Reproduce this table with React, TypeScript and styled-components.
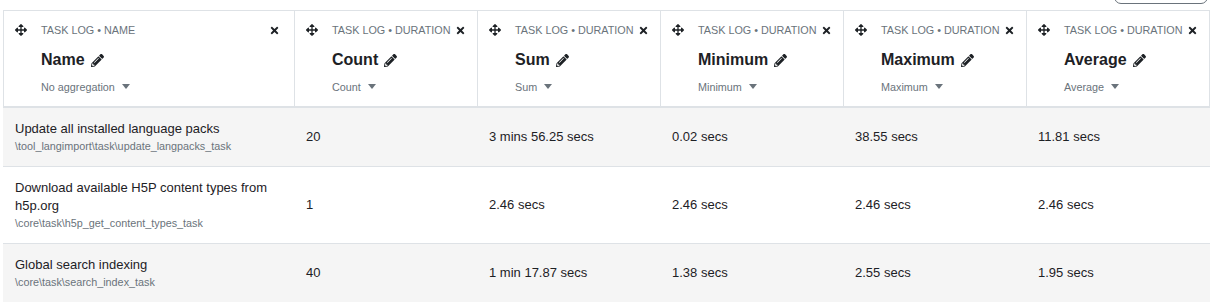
import React from 'react'
import styled, { createGlobalStyle } from 'styled-components'
import { FaArrowsAlt, FaTimes, FaPencilAlt } from 'react-icons/fa'

const GlobalStyle = createGlobalStyle`
  * {
    box-sizing: border-box;
  }
  body {
    margin: 0;
    background: #fff;
    color: #1d2125;
    font-family: "Liberation Sans", Arial, sans-serif;
  }
`

const Page = styled.main`
  padding-left: 3px;
  width: 1210px;
`

const Toolbar = styled.div`
  height: 10px;
  overflow: hidden;
  display: flex;
  justify-content: flex-end;
  align-items: flex-end;
  padding-right: 2px;
`

const ToolButton = styled.button`
  width: 94px;
  height: 32px;
  margin-bottom: 6px;
  border: 1px solid #6a737b;
  border-radius: 7px;
  background: #fff;
`

const HeadRow = styled.div`
  display: grid;
  grid-template-columns: 291px repeat(5, 183px);
  border-left: 1px solid #dee2e6;
  border-top: 1px solid #dee2e6;
  border-bottom: 2px solid #dee2e6;
`

const HeadCell = styled.div`
  display: flex;
  padding: 11px 14px 11px 11px;
  border-right: 1px solid #dee2e6;
`

const Handle = styled.div`
  flex: 0 0 26px;
  height: 16px;
  display: flex;
  align-items: center;
  font-size: 12px;
  color: #1d2125;
`

const HeadBody = styled.div`
  flex: 1;
  min-width: 0;
  display: flex;
  flex-direction: column;
`

const TopLine = styled.div`
  display: flex;
  align-items: center;
  justify-content: space-between;
  gap: 4px;
  height: 16px;
`

const GroupLabel = styled.span`
  font-size: 10.8px;
  line-height: 16px;
  text-transform: uppercase;
  white-space: nowrap;
  color: #6a737b;
`

const CloseIcon = styled.span`
  display: flex;
  align-items: center;
  font-size: 11px;
  color: #1d2125;
`

const Title = styled.div`
  display: flex;
  align-items: center;
  gap: 6px;
  margin-top: 10px;
  height: 24px;
  font-size: 16px;
  font-weight: 700;
  color: #1d2125;
  svg {
    font-size: 13px;
  }
`

const Aggregation = styled.div`
  display: flex;
  align-items: center;
  gap: 7px;
  margin-top: 7px;
  height: 16px;
  font-size: 10.8px;
  color: #6a737b;
`

const Caret = styled.span`
  width: 0;
  height: 0;
  border-left: 4px solid transparent;
  border-right: 4px solid transparent;
  border-top: 5px solid #6a737b;
  margin-top: -2px;
`

const BodyRow = styled.div<{ $striped: boolean }>`
  display: grid;
  grid-template-columns: 291px repeat(5, 183px) 1fr;
  align-items: center;
  background: ${({ $striped }) => ($striped ? '#f5f5f5' : '#fff')};
  border-bottom: 1px solid #dee2e6;
`

const Cell = styled.div`
  padding: 12px;
  font-size: 13px;
  line-height: 18px;
  color: #1d2125;
`

const TaskName = styled.div`
  font-size: 13px;
  line-height: 18px;
`

const TaskClass = styled.div`
  font-size: 10.8px;
  line-height: 16px;
  color: #6a737b;
`

const columns = [
  { group: 'Task log • Name', title: 'Name', agg: 'No aggregation' },
  { group: 'Task log • Duration', title: 'Count', agg: 'Count' },
  { group: 'Task log • Duration', title: 'Sum', agg: 'Sum' },
  { group: 'Task log • Duration', title: 'Minimum', agg: 'Minimum' },
  { group: 'Task log • Duration', title: 'Maximum', agg: 'Maximum' },
  { group: 'Task log • Duration', title: 'Average', agg: 'Average' }
]

const rows = [
  {
    name: 'Update all installed language packs',
    cls: '\\tool_langimport\\task\\update_langpacks_task',
    values: ['20', '3 mins 56.25 secs', '0.02 secs', '38.55 secs', '11.81 secs']
  },
  {
    name: 'Download available H5P content types from h5p.org',
    cls: '\\core\\task\\h5p_get_content_types_task',
    values: ['1', '2.46 secs', '2.46 secs', '2.46 secs', '2.46 secs']
  },
  {
    name: 'Global search indexing',
    cls: '\\core\\task\\search_index_task',
    values: ['40', '1 min 17.87 secs', '1.38 secs', '2.55 secs', '1.95 secs']
  }
]

const App: React.FC = () => {
  return (
    <Page>
      <GlobalStyle />
      <Toolbar>
        <ToolButton aria-label="Actions" />
      </Toolbar>
      <HeadRow>
        {columns.map(col => (
          <HeadCell key={col.title}>
            <Handle>
              <FaArrowsAlt />
            </Handle>
            <HeadBody>
              <TopLine>
                <GroupLabel>{col.group}</GroupLabel>
                <CloseIcon>
                  <FaTimes />
                </CloseIcon>
              </TopLine>
              <Title>
                {col.title}
                <FaPencilAlt />
              </Title>
              <Aggregation>
                {col.agg}
                <Caret />
              </Aggregation>
            </HeadBody>
          </HeadCell>
        ))}
      </HeadRow>
      {rows.map((row, i) => (
        <BodyRow key={row.name} $striped={i % 2 === 0}>
          <Cell>
            <TaskName>{row.name}</TaskName>
            <TaskClass>{row.cls}</TaskClass>
          </Cell>
          {row.values.map((v, j) => (
            <Cell key={j}>{v}</Cell>
          ))}
        </BodyRow>
      ))}
    </Page>
  )
}

export default App
